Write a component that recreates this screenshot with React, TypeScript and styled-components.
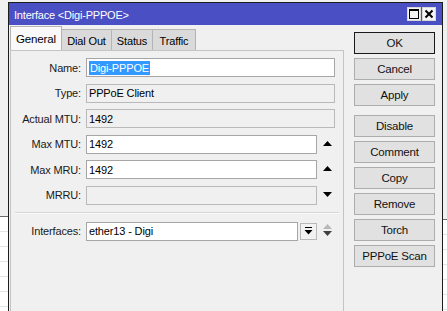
import React from 'react';
import styled, { createGlobalStyle } from 'styled-components';

const Global = createGlobalStyle`
  html, body { margin: 0; padding: 0; }
  body {
    font-family: "Liberation Sans", Arial, sans-serif;
    font-size: 11px;
    letter-spacing: -0.15px;
    color: #000;
    background: #f0f0f0;
  }
  * { box-sizing: border-box; }
`;

const Screen = styled.div`
  width: 447px;
  height: 311px;
  overflow: hidden;
  display: flex;
  align-items: stretch;
  background: #f0f0f0;
`;

const Backdrop = styled.div<{ $w: number; $listTop: number }>`
  width: ${(p) => p.$w}px;
  flex: none;
  background:
    linear-gradient(#f0f0f0 ${(p) => p.$listTop}px, #6b6b6b ${(p) => p.$listTop}px, #6b6b6b ${(p) => p.$listTop + 1}px, transparent ${(p) => p.$listTop + 1}px),
    repeating-linear-gradient(#ffffff 0px, #ffffff 14px, #e4e4e4 14px, #e4e4e4 15px);
  background-position: 0 0, 0 ${(p) => p.$listTop + 1}px;
`;

const Window = styled.div`
  width: 435px;
  flex: none;
  margin-top: 2px;
  border: 1px solid #1c1c1c;
  border-bottom: none;
  background: #f0f0f0;
  display: flex;
  flex-direction: column;
`;

const TitleBar = styled.div`
  height: 22px;
  background: #4a50c4;
  color: #fff;
  display: flex;
  align-items: center;
  justify-content: space-between;
  padding: 0 6px 0 5px;
`;

const TitleText = styled.span`
  font-size: 11px;
  letter-spacing: -0.2px;
  padding-top: 1px;
`;

const TitleButtons = styled.div`
  display: flex;
  gap: 1px;
`;

const TitleButton = styled.div`
  width: 14px;
  height: 14px;
  background: #f4f4f4;
  border: 1px solid #d8d8d8;
  display: flex;
  align-items: center;
  justify-content: center;
`;

const Body = styled.div`
  flex: 1;
  display: flex;
  padding: 0 7px 0 1px;
  gap: 10px;
`;

const LeftPane = styled.div`
  width: 334px;
  display: flex;
  flex-direction: column;
`;

const TabRow = styled.div`
  height: 25px;
  display: flex;
  align-items: flex-end;
`;

const Tab = styled.div<{ $active?: boolean; $w: number }>`
  width: ${(p) => p.$w}px;
  height: ${(p) => (p.$active ? 24 : 21)}px;
  display: flex;
  align-items: center;
  justify-content: center;
  border: 1px solid #b4b4b4;
  border-bottom: none;
  margin-left: ${(p) => (p.$active ? 0 : -1)}px;
  background: ${(p) => (p.$active ? '#f9f9f9' : '#dadada')};
  font-size: ${(p) => (p.$active ? 11.5 : 11)}px;
  padding-top: ${(p) => (p.$active ? 0 : 1)}px;
  position: relative;
  z-index: ${(p) => (p.$active ? 1 : 0)};
`;

const Panel = styled.div`
  flex: 1;
  border: 1px solid #c4c4c4;
  border-bottom: none;
  padding-top: 7px;
  display: flex;
  flex-direction: column;
`;

const Row = styled.div`
  height: 19px;
  display: flex;
  align-items: center;
  margin-bottom: 6.6px;
`;

const Label = styled.div`
  width: 70px;
  text-align: right;
  margin-right: 5px;
  color: #1a1a1a;
  flex: none;
`;

const Input = styled.div<{ $w: number; $ro?: boolean }>`
  width: ${(p) => p.$w}px;
  height: 19px;
  flex: none;
  border: 1px solid ${(p) => (p.$ro ? '#b9b9b9' : '#a6a6a6')};
  background: ${(p) => (p.$ro ? '#f0f0f0' : '#ffffff')};
  padding-left: 2px;
  display: flex;
  align-items: center;
  white-space: nowrap;
  overflow: hidden;
`;

const Selected = styled.span`
  background: #3399ff;
  color: #fff;
  padding: 1px 1px;
`;

const ArrowSlot = styled.div`
  width: 18px;
  height: 19px;
  display: flex;
  align-items: center;
  justify-content: center;
  padding: 0 0 2px 2px;
`;

const Separator = styled.div`
  height: 2px;
  margin: 0 4px 8px 4px;
  border-top: 1px solid #d6d6d6;
  border-bottom: 1px solid #fbfbfb;
`;

const DropButton = styled.div`
  width: 17px;
  height: 17px;
  margin-left: 2px;
  border: 1px solid #b9b9b9;
  background: #f2f2f2;
  display: flex;
  align-items: center;
  justify-content: center;
  flex: none;
`;

const ButtonColumn = styled.div`
  width: 81px;
  padding-top: 7px;
  display: flex;
  flex-direction: column;
  gap: 4px;
`;

const Button = styled.div<{ $default?: boolean; $gapBefore?: boolean }>`
  height: 22px;
  border: 1px solid ${(p) => (p.$default ? '#1a1a1a' : '#adadad')};
  background: #e1e1e1;
  display: flex;
  align-items: center;
  justify-content: center;
  font-size: 11.5px;
  letter-spacing: -0.2px;
  color: #111;
  margin-top: ${(p) => (p.$gapBefore ? 5 : 0)}px;
`;

const Up = ({ color = '#000' }: { color?: string }) => (
  <svg width="9" height="5" viewBox="0 0 9 5">
    <polygon points="0,5 9,5 4.5,0" fill={color} />
  </svg>
);

const Down = ({ color = '#000' }: { color?: string }) => (
  <svg width="9" height="5" viewBox="0 0 9 5">
    <polygon points="0,0 9,0 4.5,5" fill={color} />
  </svg>
);

const UpDown = () => (
  <svg width="9" height="12" viewBox="0 0 9 12">
    <polygon points="0,5 9,5 4.5,0" fill="#b8b8b8" />
    <polygon points="0,7 9,7 4.5,12" fill="#404040" />
  </svg>
);

const DropIcon = () => (
  <svg width="9" height="9" viewBox="0 0 9 9">
    <rect x="1" y="0" width="7" height="1" fill="#000" />
    <polygon points="0.5,3 8.5,3 4.5,7.5" fill="#000" />
  </svg>
);

const MaxIcon = () => (
  <svg width="10" height="10" viewBox="0 0 10 10">
    <rect x="0.5" y="0.5" width="9" height="9" fill="none" stroke="#000" strokeWidth="1" />
    <rect x="0.5" y="0.5" width="9" height="1.5" fill="#000" />
  </svg>
);

const CloseIcon = () => (
  <svg width="10" height="10" viewBox="0 0 10 10">
    <path d="M1.5 1.5 L8.5 8.5 M8.5 1.5 L1.5 8.5" stroke="#000" strokeWidth="2" />
  </svg>
);

export default function App() {
  return (
    <>
      <Global />
      <Screen>
        <Backdrop $w={8} $listTop={216} />
        <Window>
          <TitleBar>
            <TitleText>Interface &lt;Digi-PPPOE&gt;</TitleText>
            <TitleButtons>
              <TitleButton><MaxIcon /></TitleButton>
              <TitleButton><CloseIcon /></TitleButton>
            </TitleButtons>
          </TitleBar>
          <Body>
            <LeftPane>
              <TabRow>
                <Tab $active $w={52}>General</Tab>
                <Tab $w={51}>Dial Out</Tab>
                <Tab $w={42}>Status</Tab>
                <Tab $w={44}>Traffic</Tab>
              </TabRow>
              <Panel>
                <Row>
                  <Label>Name:</Label>
                  <Input $w={249}><Selected>Digi-PPPOE</Selected></Input>
                </Row>
                <Row>
                  <Label>Type:</Label>
                  <Input $w={249} $ro>PPPoE Client</Input>
                </Row>
                <Row>
                  <Label>Actual MTU:</Label>
                  <Input $w={249} $ro>1492</Input>
                </Row>
                <Row>
                  <Label>Max MTU:</Label>
                  <Input $w={231}>1492</Input>
                  <ArrowSlot><Up /></ArrowSlot>
                </Row>
                <Row>
                  <Label>Max MRU:</Label>
                  <Input $w={231}>1492</Input>
                  <ArrowSlot><Up /></ArrowSlot>
                </Row>
                <Row>
                  <Label>MRRU:</Label>
                  <Input $w={231} $ro></Input>
                  <ArrowSlot><Down /></ArrowSlot>
                </Row>
                <Separator />
                <Row>
                  <Label>Interfaces:</Label>
                  <Input $w={212}>ether13 - Digi</Input>
                  <DropButton><DropIcon /></DropButton>
                  <ArrowSlot><UpDown /></ArrowSlot>
                </Row>
              </Panel>
            </LeftPane>
            <ButtonColumn>
              <Button $default>OK</Button>
              <Button>Cancel</Button>
              <Button>Apply</Button>
              <Button $gapBefore>Disable</Button>
              <Button>Comment</Button>
              <Button>Copy</Button>
              <Button>Remove</Button>
              <Button>Torch</Button>
              <Button>PPPoE Scan</Button>
            </ButtonColumn>
          </Body>
        </Window>
        <Backdrop $w={4} $listTop={219} />
      </Screen>
    </>
  );
}
